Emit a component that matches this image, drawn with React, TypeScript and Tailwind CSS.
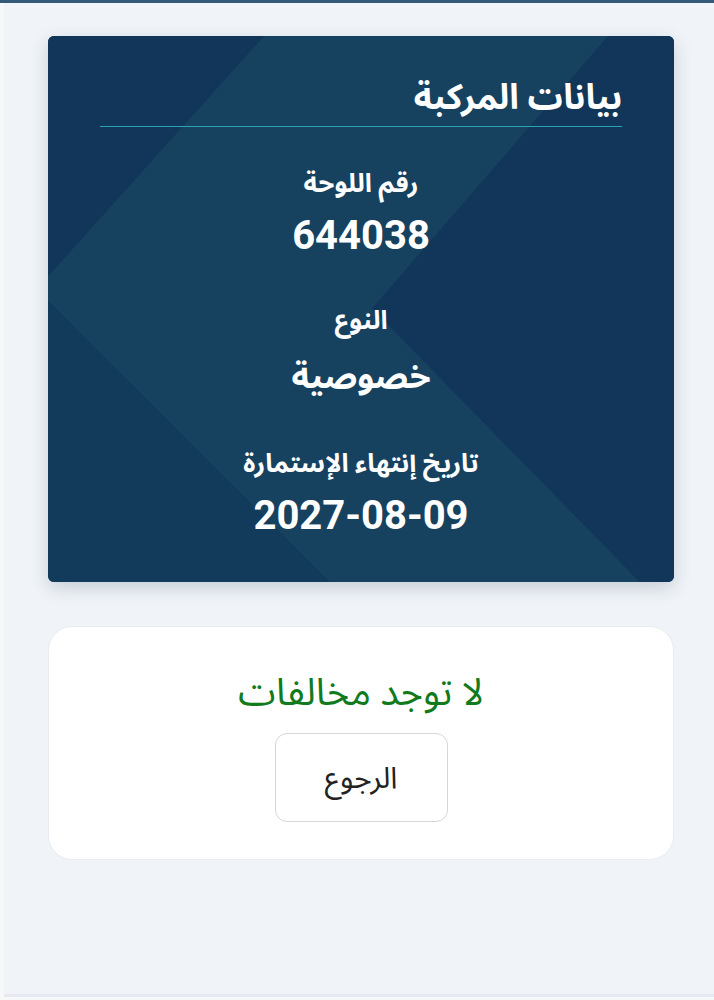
import React from 'react';

const FONT = "font-['Roboto','Noto_Sans_Arabic','Noto_Sans','DejaVu_Sans',sans-serif]";

function InfoItem({ label, value, valueClass }: { label: string; value: string; valueClass?: string }) {
  return (
    <div className="flex flex-col items-center">
      <div className="text-[26px] leading-[33px] font-bold text-white">{label}</div>
      <div className={`mt-[12px] font-bold text-white ${valueClass ?? 'text-[40px] leading-[48px]'}`}>{value}</div>
    </div>
  );
}

// diagonal background shapes on the vehicle card
function CardPattern() {
  return (
    <svg className="absolute inset-0 h-full w-full" viewBox="0 0 626 545" preserveAspectRatio="none">
      <polygon points="0,0 216,0 0,240" fill="#113659" />
      <polygon points="560,0 626,0 626,580 324,272" fill="#113659" />
      <polygon points="0,264 282,545 0,545" fill="#123a5b" />
    </svg>
  );
}

export default function App() {
  return (
    <div dir="rtl" className={`${FONT} min-h-[1000px] w-full bg-[#f7f8fa]`}>
      <div className="h-[3px] bg-[#36597a]" />
      <div className="ml-[4px] min-h-[994px] bg-[#f0f4f8] pt-[33px] border-b-[3px] border-[#e6eaf0]">
        {/* vehicle data card */}
        <div className="relative ml-[44px] mr-[40px] overflow-hidden rounded-[6px] bg-[#17425f] shadow-[0_6px_18px_rgba(15,40,70,0.18)]">
          <CardPattern />
          <div className="relative px-[52px] pt-[39px] pb-[42px]">
            <h2 className="text-right text-[35px] leading-[45px] font-bold text-white">بيانات المركبة</h2>
            <div className="mt-[6px] h-px bg-[#2aa3b3]" />
            <div className="mt-[40px] flex flex-col gap-[44px]">
              <InfoItem label="رقم اللوحة" value="644038" />
              <InfoItem label="النوع" value="خصوصية" valueClass="text-[34px] leading-[54px] !mt-[12px]" />
              <InfoItem label="تاريخ إنتهاء الإستمارة" value="2027-08-09" />
            </div>
          </div>
        </div>

        {/* violations result */}
        <div className="ml-[44px] mr-[40px] mt-[44px] flex flex-col items-center rounded-[24px] border border-[#e8ebef] bg-white pt-[40px] pb-[37px]">
          <div className="text-[38px] leading-[51px] text-[#117a1d]">لا توجد مخالفات</div>
          <button className="mt-[15px] flex h-[89px] w-[173px] items-center justify-center rounded-[12px] border border-[#d4d6d9] bg-white text-[30px] text-[#222]">
            الرجوع
          </button>
        </div>
      </div>
    </div>
  );
}
